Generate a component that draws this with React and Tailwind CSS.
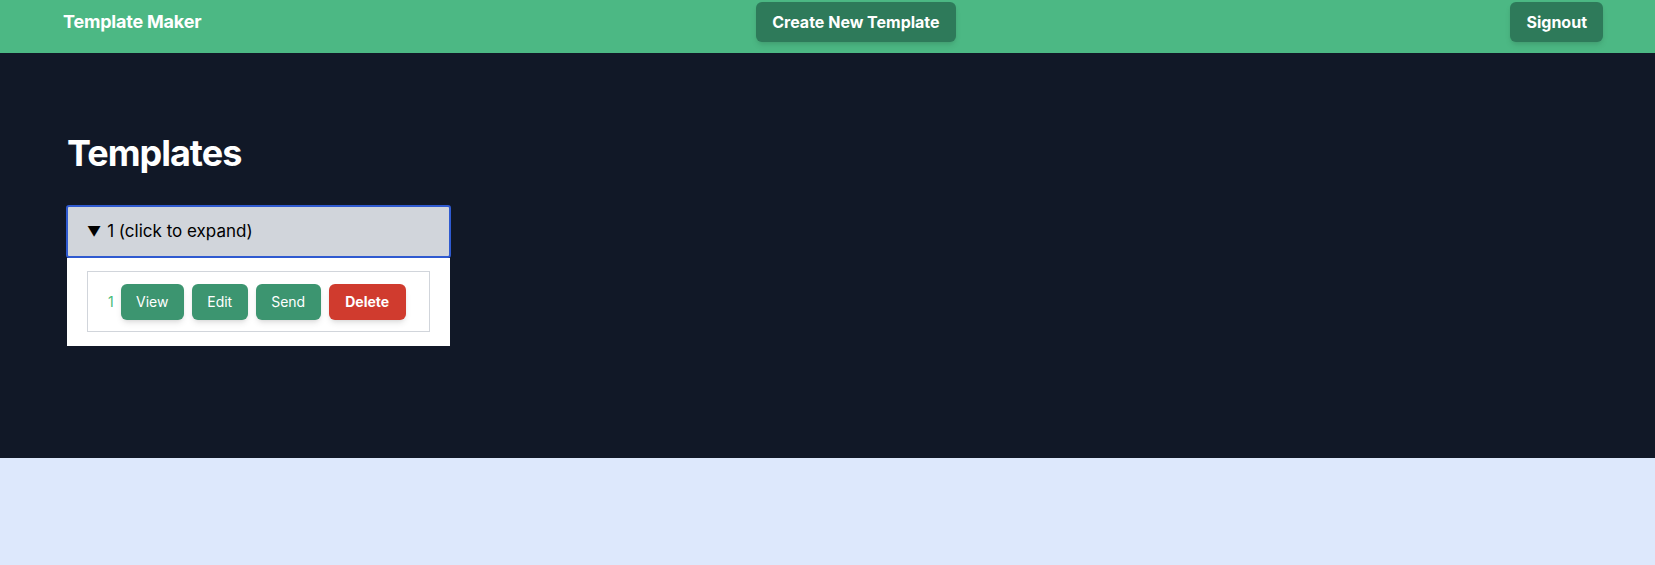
import React from 'react';

const templates = [{ id: 1, name: '1' }];

const App = () => {
  return (
    <div className="min-h-[565px] bg-[#dde8fc] font-['Inter','Liberation_Sans',sans-serif]">
      {/* Header */}
      <nav className="h-[53px] bg-[#4cb884] flex items-start justify-between pl-[63px] pr-[52px] pt-[2px]">
        <div className="h-10 flex items-center text-white text-lg font-bold tracking-[-0.2px]">Template Maker</div>
        <button className="h-10 px-4 rounded-md bg-[#2e7a5a] text-white font-bold text-base shadow-md">
          Create New Template
        </button>
        <button className="h-10 px-4 rounded-md bg-[#2e7a5a] text-white font-bold text-base shadow-md">
          Signout
        </button>
      </nav>

      {/* Main */}
      <main className="h-[405px] bg-[#111827] pl-[66px] pt-[80px]">
        <h1 className="text-white text-4xl font-bold leading-10 tracking-[-1px] ml-[1px] mb-[32px]">Templates</h1>

        <div className="w-[385px]">
          <div className="h-[53px] bg-[#d1d5db] border-2 border-[#2f5ad0] rounded-[3px] flex items-center pl-[19px] text-[17px] text-black">
            <span className="text-[14px] mr-[6px]">▼</span>
            1 (click to expand)
          </div>
          <div className="bg-white mx-px px-[20px] pt-[13px] pb-[14px]">
            {templates.map((t) => (
              <div key={t.id} className="h-[61px] border border-[#d1d5db] flex items-center pl-[20px] gap-2">
                <span className="text-[#48bb78] text-sm mr-[-1px]">{t.name}</span>
                <button className="h-9 w-[63px] rounded-md bg-[#3c9570] text-white text-sm shadow-md">View</button>
                <button className="h-9 w-[56px] rounded-md bg-[#3c9570] text-white text-sm shadow-md">Edit</button>
                <button className="h-9 w-[65px] rounded-md bg-[#3c9570] text-white text-sm shadow-md">Send</button>
                <button className="h-9 w-[77px] rounded-md bg-[#d03b2e] text-white text-sm font-bold shadow-md">Delete</button>
              </div>
            ))}
          </div>
        </div>
      </main>
    </div>
  );
};

export default App;
